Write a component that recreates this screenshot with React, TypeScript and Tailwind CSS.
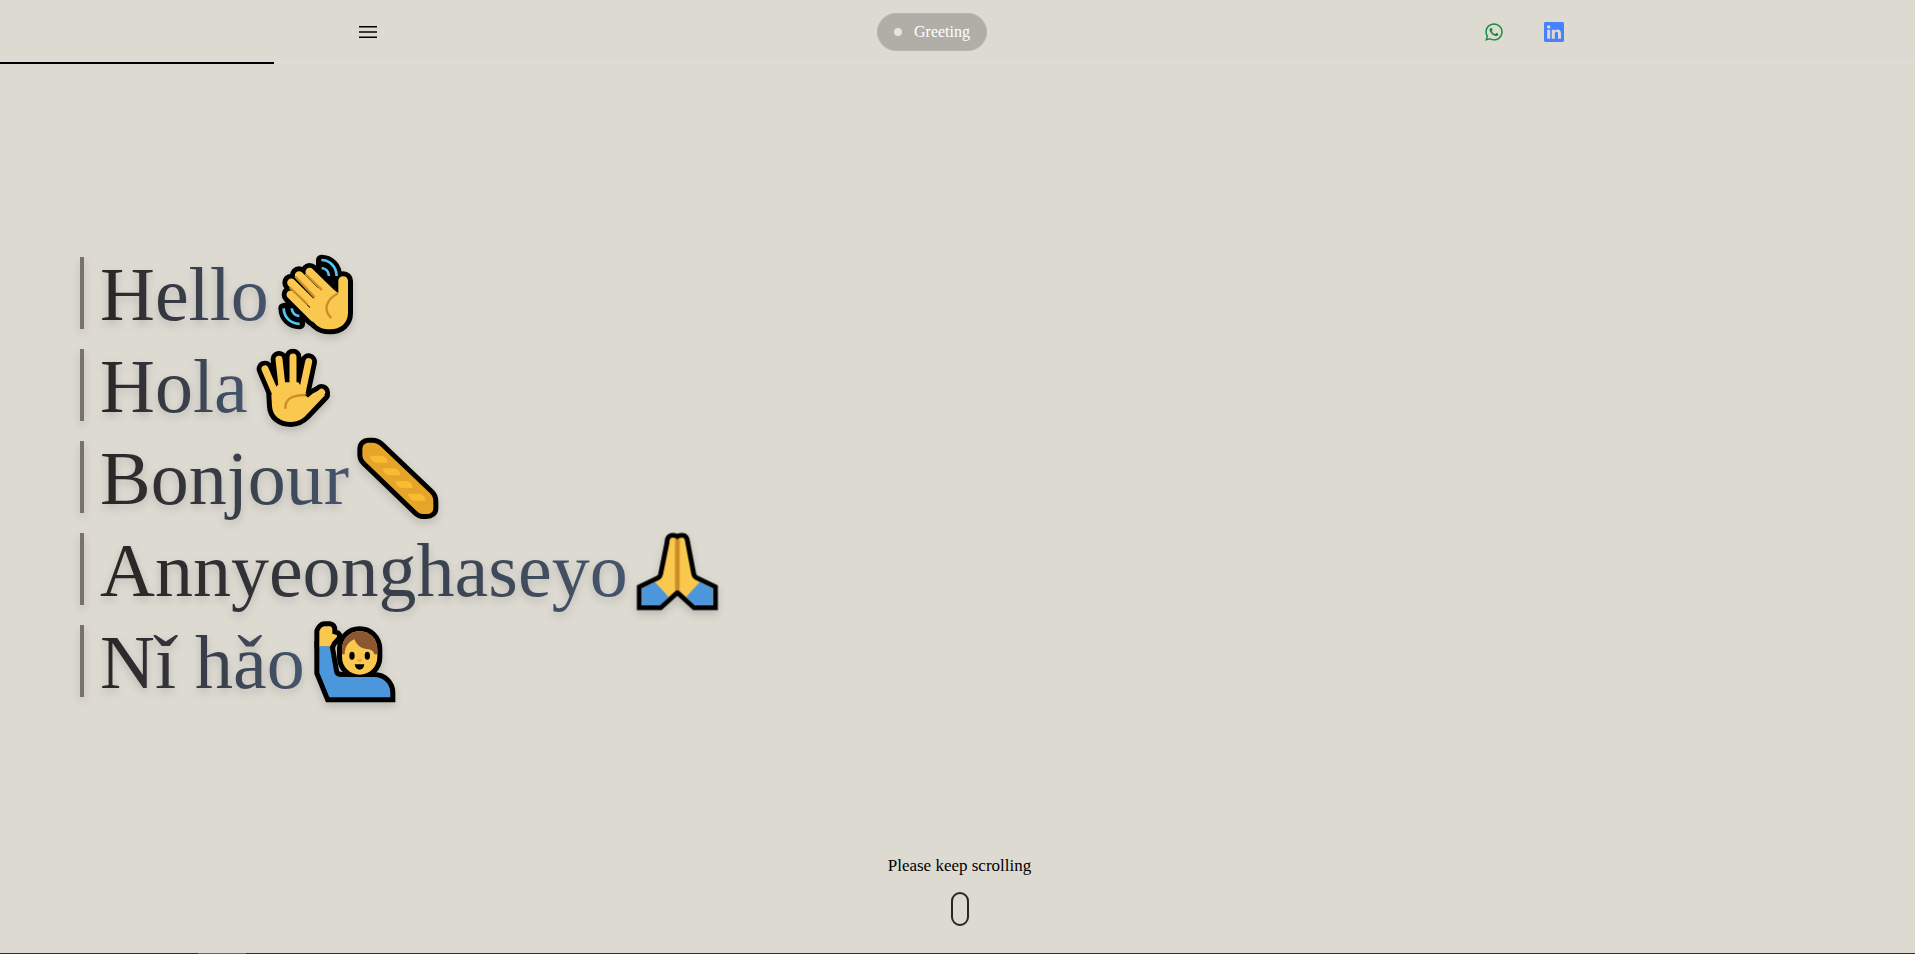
import type { ReactNode } from "react";
import { BsLinkedin } from "react-icons/bs";
import { FaWhatsapp } from "react-icons/fa";

const SKIN = "#fac84e";
const CREASE = "#cb8d24";
const SLEEVE = "#4c97dc";

function Emoji({ label, viewBox, children }: { label: string; viewBox: string; children: ReactNode }) {
  return (
    <svg
      role="img"
      aria-label={label}
      viewBox={viewBox}
      className="size-[82px] shrink-0 overflow-visible"
      fill="none"
      strokeLinecap="round"
      strokeLinejoin="round"
    >
      {children}
    </svg>
  );
}

function WavingHand() {
  const palm =
    "M204 145V109A14 14 0 0 1 233 109V205C233 235 210 254 180 254C160 254 148 250 135 238L110 212L150 110Z";
  const fingers = "M61 150L130 219M63 114L140 190M86 92L160 165M118 82L188 150";
  return (
    <Emoji label="Waving hand" viewBox="20 22 246 246">
      <g fill="#000" stroke="#000">
        <path d="M153 46C178 46 199 66 199 94L160 100L153 66Z" strokeWidth="32" />
        <path d="M40 191C41 218 60 237 88 238L92 205L64 185Z" strokeWidth="32" />
        <path d={palm} strokeWidth="30" />
        <path d={fingers} strokeWidth="54" />
      </g>
      <path d={palm} fill={SKIN} />
      <path d={fingers} stroke={SKIN} strokeWidth="25" />
      <path
        d="M107 90L153 134M76 97L131 156M60 130L109 177M200 148C168 165 158 195 181 218"
        stroke={CREASE}
        strokeWidth="7"
      />
      <path
        d="M153 46C178 46 198 66 199 94M154 70C166 71 175 81 176 94M40 191C41 218 60 237 88 238M64 191C66 204 75 213 87 214"
        stroke="#50c8f2"
        strokeWidth="8"
        strokeLinecap="butt"
      />
    </Emoji>
  );
}

function RaisedHand() {
  const palm =
    "M646 437L671 428H709L737 470L771 452L789 467L732 527C718 541 705 547 687 547C655 547 632 530 630 500L628 465Z";
  const fingers = "M609 388L642 465M651 359L661 450M693 352V450M740 366L720 460M779 458L728 508";
  return (
    <Emoji label="Raised hand" viewBox="582 313 246 246">
      <g fill="#000" stroke="#000">
        <path d={palm} strokeWidth="30" />
        <path d={fingers} strokeWidth="50" />
      </g>
      <path d={palm} fill={SKIN} />
      <path d={fingers} stroke={SKIN} strokeWidth="21" />
      <path d="M670 505C670 477 690 466 731 466" stroke={CREASE} strokeWidth="7" />
      <path d="M732 466L738 471L748 462" stroke="#000" strokeWidth="4" />
    </Emoji>
  );
}

function Baguette() {
  const loaf =
    "M930 75C930 60 938 54 950 54H960C970 54 978 58 984 64L1133 206C1140 213 1143 221 1143 230V250C1143 262 1135 268 1122 268H1112C1104 268 1098 264 1092 258L940 112C933 105 930 99 930 90Z";
  const cut = "M953 93H985C998 93 1004 103 1006 114H975C962 114 955 105 953 93Z";
  return (
    <Emoji label="Baguette" viewBox="914 34 246 246">
      <path d={loaf} fill="#000" stroke="#000" strokeWidth="30" />
      <path d={loaf} fill="#e5a42a" />
      <g fill="#fabb32">
        <path d={cut} />
        <path d={cut} transform="translate(38 38)" />
        <path d={cut} transform="translate(76 76)" />
        <path d={cut} transform="translate(114 114)" />
      </g>
    </Emoji>
  );
}

function FoldedHands() {
  const shape =
    "M133 56Q133 40 143 40Q152 40 157 46Q162 40 171 40Q180 40 181 56L199 150Q201 161 210 166L264 192V243H210L163 200Q157 194 151 200L104 243H50V192L104 166Q112 161 114 150Z";
  return (
    <Emoji label="Folded hands" viewBox="33 11 246 246">
      <path d={shape} fill="#000" stroke="#000" strokeWidth="29" strokeLinejoin="miter" />
      <path d={shape} fill={SKIN} />
      <path d="M50 192L90 173L131 218L104 243H50ZM264 192L224 173L183 218L210 243H264Z" fill={SLEEVE} />
      <path d="M150 45H164V198Q157 195 150 198Z" fill={CREASE} />
    </Emoji>
  );
}

function RaisingHand() {
  const fist = "M756 112V66C758 60 764 51 772 51H788C793 52 795 56 795 62V73L808 77Q811 80 808 84L795 98L788 112Z";
  const body = "M756 111H787L801 190Q806 203 822 203H920C950 203 969 225 969 250V264H786L756 190Z";
  const head =
    "M824 120C824 88 848 66 877 66C906 66 930 88 930 120V143C930 173 906 196 877 196C848 196 824 173 824 143Z";
  return (
    <Emoji label="Person raising hand" viewBox="737 32 246 246">
      <g fill="#000" stroke="#000" strokeWidth="30">
        <path d={fist} />
        <path d={body} strokeLinejoin="miter" />
        <path d={head} />
      </g>
      <path d={fist} fill={SKIN} />
      <path d={body} fill={SLEEVE} />
      <path d={head} fill={SKIN} />
      <path
        d="M824 135V120C824 88 848 66 877 66C906 66 930 88 930 120V135H921Q919 124 905 120C885 120 866 108 862 90C848 95 832 108 832 135Z"
        fill="#8b5731"
      />
      <g fill="#000">
        <ellipse cx="854" cy="139" rx="8" ry="12" />
        <ellipse cx="900" cy="139" rx="8" ry="12" />
        <path d="M862 165H891C889 178 883 181 877 181C869 181 864 176 862 165Z" />
      </g>
      <path d="M869 150H885Q883 158 877 158Q871 158 869 150Z" fill="#f59a55" />
    </Emoji>
  );
}

const greetings: { text: string; lang: string; emoji: ReactNode }[] = [
  { text: "Hello", lang: "en", emoji: <WavingHand /> },
  { text: "Hola", lang: "es", emoji: <RaisedHand /> },
  { text: "Bonjour", lang: "fr", emoji: <Baguette /> },
  { text: "Annyeonghaseyo", lang: "ko-Latn", emoji: <FoldedHands /> },
  { text: "Nǐ hǎo", lang: "zh-Latn", emoji: <RaisingHand /> },
];

function Header() {
  return (
    <header className="self-start">
      <div className="mx-auto flex h-[62px] max-w-7xl items-center justify-between px-8 pt-0.5">
        <button type="button" aria-label="Open menu" className="flex w-9 justify-center text-black">
          <svg viewBox="0 0 24 24" className="size-6" fill="none" stroke="currentColor" strokeWidth="1.5">
            <path d="M3 6.75H21M3 12H21M3 17.25H21" />
          </svg>
        </button>
        <button
          type="button"
          className="flex items-center gap-3 rounded-full border border-[#b7b4ad] bg-[#b1aea7] px-4 py-2 text-base leading-5 text-white"
        >
          <span className="size-2 rounded-full bg-[#e6e4df]" />
          Greeting
        </button>
        <nav aria-label="Contact" className="flex w-[87px] items-center justify-between pr-px pl-1.5">
          <a href="#whatsapp" aria-label="WhatsApp" className="text-[#168a40]">
            <FaWhatsapp className="size-5" />
          </a>
          <a href="#linkedin" aria-label="LinkedIn" className="text-[#4880ff]">
            <BsLinkedin className="size-5" />
          </a>
        </nav>
      </div>
      <div className="h-0.5 border-t border-[#e1dfd9]">
        <div className="-mt-px h-0.5 w-1/7 bg-black" />
      </div>
    </header>
  );
}

export default function App() {
  return (
    <div className="grid min-h-screen grid-rows-[1fr_auto_1fr] bg-[#dddad2] font-['Liberation_Serif',serif]">
      <Header />
      <main className="flex flex-col gap-5 px-20">
        {greetings.map(({ text, lang, emoji }) => (
          <h1
            key={text}
            lang={lang}
            className="flex h-18 items-center gap-2 border-l-4 border-stone-500 pl-4 text-[76px] leading-[88px] drop-shadow-lg"
          >
            <span className="bg-linear-to-r from-stone-800 to-slate-600 bg-clip-text pt-0.5 text-transparent">
              {text}
            </span>
            {emoji}
          </h1>
        ))}
      </main>
      <footer className="self-end">
        <div className="flex flex-col items-center gap-3.5 pb-[27px] pl-1">
          <p className="text-[17px] leading-6 text-black">Please keep scrolling</p>
          <div className="h-[34px] w-[18px] rounded-full border-2 border-stone-800" />
        </div>
        <div className="h-px bg-[#252d35] pl-[198px]">
          <div className="h-px w-12 bg-[#6b6068]" />
        </div>
      </footer>
    </div>
  );
}
